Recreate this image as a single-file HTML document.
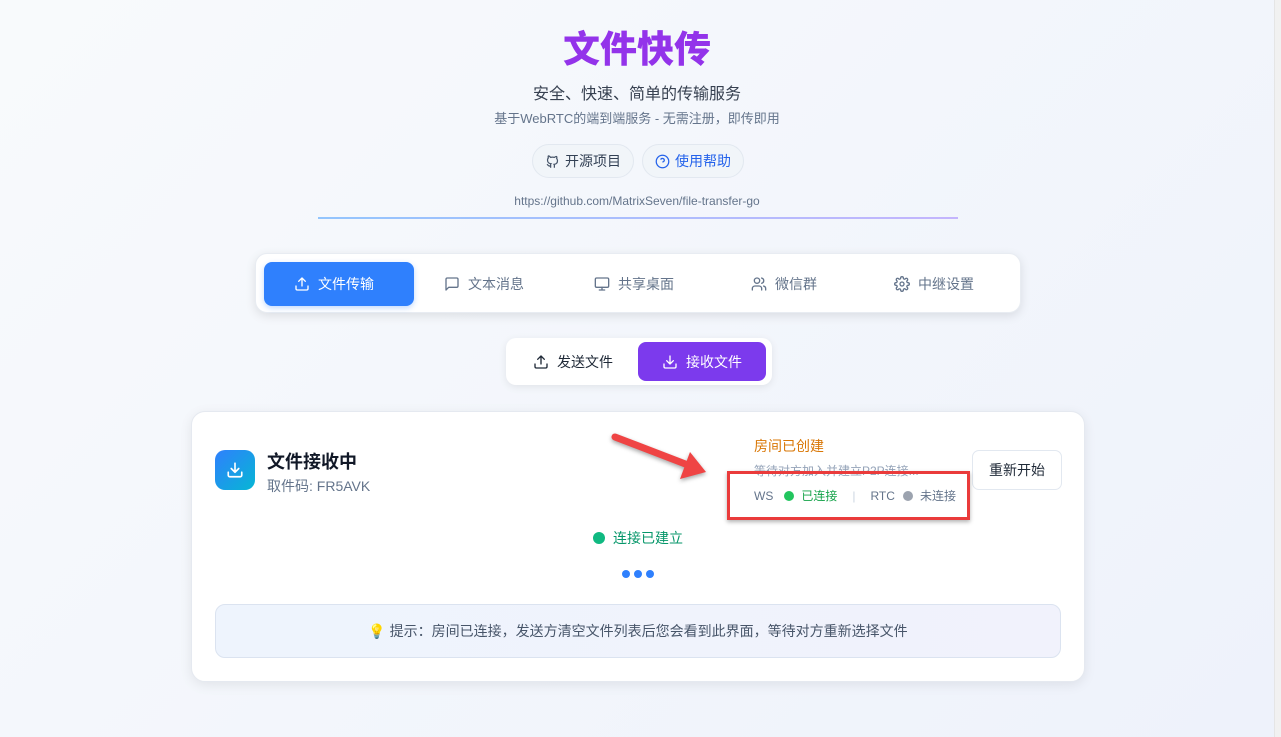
<!DOCTYPE html>
<html><head><meta charset="utf-8"><style>
*{box-sizing:border-box;margin:0;padding:0}
body{width:1281px;height:737px;overflow:hidden;background:linear-gradient(135deg,#f8fafc,#eef2fb);font-family:"Liberation Sans","Noto Sans CJK SC",sans-serif;position:relative;color:#334155}
.abs{position:absolute}
.c{text-align:center;left:0;width:1274px}
.sb{position:absolute;right:0;top:0;width:7px;height:737px;background:#f1f1f1;border-left:1px solid #e5e5e5}
.pill{position:absolute;top:144px;height:34px;border-radius:17px;border:1px solid #e2e8f0;background:#f1f5f9;font-size:14px;display:flex;align-items:center;justify-content:center;gap:5px}
.nav{position:absolute;left:255px;top:253px;width:766px;height:60px;background:#fff;border-radius:12px;box-shadow:0 3px 10px rgba(0,0,0,.1);border:1px solid #e8ecf2}
.tab{position:absolute;top:8px;height:44px;width:150px;display:flex;align-items:center;justify-content:center;gap:8px;font-size:14px;color:#64748b;padding-right:10px}
.tab svg{width:16px;height:16px;fill:none;stroke:currentColor;stroke-width:2;stroke-linecap:round;stroke-linejoin:round}
.card{position:absolute;left:191px;top:411px;width:894px;height:271px;background:#fff;border-radius:14px;border:1px solid #e5e9f0;box-shadow:0 3px 12px rgba(0,0,0,.08)}
</style></head><body>
<div class="sb"></div>
<div class="abs c" style="top:26px;font-size:37px;font-weight:900;color:#9333ea;line-height:48px">文件快传</div>
<div class="abs c" style="top:80px;font-size:16px;color:#374151">安全、快速、简单的传输服务</div>
<div class="abs c" style="top:108px;font-size:13px;color:#64748b">基于WebRTC的端到端服务 - 无需注册，即传即用</div>
<div class="pill" style="left:532px;width:102px;color:#334155"><svg width="15" height="15" viewBox="0 0 24 24" fill="none" stroke="#475569" stroke-width="2"><path d="M9 19c-4 1.5-4-2-6-2.5M15 22v-3.5c0-1 .1-1.4-.5-2 2.8-.3 5.5-1.4 5.5-6a4.6 4.6 0 0 0-1.300-3.2 4.2 4.2 0 0 0-.1-3.2s-1.1-.3-3.5 1.3a12 12 0 0 0-6.2 0C6.5 2.8 5.4 3.1 5.4 3.1a4.2 4.2 0 0 0-.1 3.2A4.6 4.6 0 0 0 4 9.5c0 4.6 2.7 5.7 5.5 6-.6.6-.6 1.2-.5 2V22"/></svg>开源项目</div>
<div class="pill" style="left:642px;width:102px;color:#2563eb"><svg width="15" height="15" viewBox="0 0 24 24" fill="none" stroke="#2563eb" stroke-width="2"><circle cx="12" cy="12" r="10"/><path d="M9.1 9a3 3 0 0 1 5.8 1c0 2-3 3-3 3M12 17h.01"/></svg>使用帮助</div>
<div class="abs c" style="top:194px;font-size:12px;color:#64748b">https://github.com/MatrixSeven/file-transfer-go</div>
<div class="abs" style="left:318px;top:217px;width:640px;height:2px;background:linear-gradient(90deg,#93c5fd,#c4b5fd)"></div>

<div class="nav">
<div class="tab" style="left:8px;background:#2f80fd;color:#fff;border-radius:8px;box-shadow:0 2px 6px rgba(47,128,253,.3)"><svg viewBox="0 0 24 24"><path d="M21 15v4a2 2 0 0 1-2 2H5a2 2 0 0 1-2-2v-4M17 8l-5-5-5 5M12 3v12"/></svg>文件传输</div>
<div class="tab" style="left:158px"><svg viewBox="0 0 24 24"><path d="M21 15a2 2 0 0 1-2 2H7l-4 4V5a2 2 0 0 1 2-2h14a2 2 0 0 1 2 2z"/></svg>文本消息</div>
<div class="tab" style="left:308px"><svg viewBox="0 0 24 24"><rect x="2" y="3" width="20" height="14" rx="2"/><path d="M8 21h8M12 17v4"/></svg>共享桌面</div>
<div class="tab" style="left:458px"><svg viewBox="0 0 24 24"><path d="M16 21v-2a4 4 0 0 0-4-4H6a4 4 0 0 0-4 4v2"/><circle cx="9" cy="7" r="4"/><path d="M22 21v-2a4 4 0 0 0-3-3.9M16 3.1a4 4 0 0 1 0 7.8"/></svg>微信群</div>
<div class="tab" style="left:608px"><svg viewBox="0 0 24 24"><circle cx="12" cy="12" r="3"/><path d="M19.4 15a1.7 1.7 0 0 0 .3 1.8l.1.1a2 2 0 1 1-2.8 2.8l-.1-.1a1.7 1.7 0 0 0-2.9 1.2V21a2 2 0 1 1-4 0v-.1A1.7 1.7 0 0 0 8.9 19.4a1.7 1.7 0 0 0-1.8.3l-.1.1a2 2 0 1 1-2.8-2.8l.1-.1A1.7 1.7 0 0 0 3.1 14H3a2 2 0 1 1 0-4h.1A1.7 1.7 0 0 0 4.6 8.9a1.7 1.7 0 0 0-.3-1.8l-.1-.1a2 2 0 1 1 2.8-2.8l.1.1a1.7 1.7 0 0 0 1.8.3H9a1.7 1.7 0 0 0 1-1.5V3a2 2 0 1 1 4 0v.1a1.7 1.7 0 0 0 1 1.5 1.7 1.7 0 0 0 1.8-.3l.1-.1a2 2 0 1 1 2.8 2.8l-.1.1a1.7 1.7 0 0 0-.3 1.8V9a1.7 1.7 0 0 0 1.5 1H21a2 2 0 1 1 0 4h-.1a1.7 1.7 0 0 0-1.5 1z"/></svg>中继设置</div>
</div>

<div class="abs" style="left:506px;top:338px;width:266px;height:47px;background:#fff;border-radius:10px;box-shadow:0 2px 8px rgba(0,0,0,.08)">
<div class="tab" style="left:6px;top:4px;width:122px;height:39px;color:#1f2937;padding:0"><svg viewBox="0 0 24 24"><path d="M21 15v4a2 2 0 0 1-2 2H5a2 2 0 0 1-2-2v-4M17 8l-5-5-5 5M12 3v12"/></svg>发送文件</div>
<div class="tab" style="left:132px;top:4px;width:128px;height:39px;color:#fff;background:#7c3aed;border-radius:8px;padding:0"><svg viewBox="0 0 24 24"><path d="M21 15v4a2 2 0 0 1-2 2H5a2 2 0 0 1-2-2v-4M7 10l5 5 5-5M12 15V3"/></svg>接收文件</div>
</div>

<div class="card">
<div class="abs" style="left:23px;top:38px;width:40px;height:40px;border-radius:10px;background:linear-gradient(135deg,#2f80fd,#06b6d4);display:flex;align-items:center;justify-content:center"><svg width="18" height="18" viewBox="0 0 24 24" fill="none" stroke="#fff" stroke-width="2.2" stroke-linecap="round" stroke-linejoin="round"><path d="M21 15v4a2 2 0 0 1-2 2H5a2 2 0 0 1-2-2v-4M7 10l5 5 5-5M12 15V3"/></svg></div>
<div class="abs" style="left:75px;top:36px;font-size:18px;font-weight:bold;color:#111827">文件接收中</div>
<div class="abs" style="left:75px;top:64px;font-size:14px;color:#64748b">取件码: FR5AVK</div>
<div class="abs" style="left:562px;top:24px;font-size:14px;color:#d97706">房间已创建</div>
<div class="abs" style="left:562px;top:50px;font-size:12px;color:#94a3b8">等待对方加入并建立P2P连接...</div>
<div class="abs" style="left:562px;top:75px;font-size:12px;color:#64748b;display:flex;align-items:center;white-space:nowrap">WS<span style="width:10px;height:10px;border-radius:50%;background:#22c55e;margin:0 7px 0 11px"></span><span style="color:#16a34a">已连接</span><span style="color:#cbd5e1;margin:0 15px">|</span>RTC<span style="width:10px;height:10px;border-radius:50%;background:#9ca3af;margin:0 7px 0 8px"></span>未连接</div>
<div class="abs" style="left:780px;top:38px;width:90px;height:40px;border:1px solid #e2e8f0;border-radius:7px;font-size:14px;color:#1f2937;display:flex;align-items:center;justify-content:center">重新开始</div>
<div class="abs" style="left:401px;top:116px;font-size:14px;color:#059669;display:flex;align-items:center;gap:8px;white-space:nowrap"><span style="width:12px;height:12px;border-radius:50%;background:#10b981"></span>连接已建立</div>
<div class="abs" style="left:430px;top:158px;display:flex;gap:4px"><span style="width:8px;height:8px;border-radius:50%;background:#2f80fd"></span><span style="width:8px;height:8px;border-radius:50%;background:#2f80fd"></span><span style="width:8px;height:8px;border-radius:50%;background:#2f80fd"></span></div>
<div class="abs" style="left:23px;top:192px;width:846px;height:54px;border-radius:10px;border:1px solid #dbe3f0;background:linear-gradient(90deg,#eef4fd,#f1f2fc);font-size:14px;color:#475569;display:flex;align-items:center;justify-content:center">💡 提示：房间已连接，发送方清空文件列表后您会看到此界面，等待对方重新选择文件</div>
</div>

<div class="abs" style="left:727px;top:471px;width:243px;height:49px;border:3px solid #ea3b3b;box-shadow:0 2px 4px rgba(0,0,0,.3)"></div>
<svg class="abs" style="left:600px;top:425px" width="120" height="60"><g filter="drop-shadow(0 2px 2px rgba(0,0,0,.35))"><line x1="15" y1="12" x2="88" y2="40" stroke="#ef4444" stroke-width="7" stroke-linecap="round"/><polygon points="106,47 80,54 90,27" fill="#ef4444"/></g></svg>
</body></html>
